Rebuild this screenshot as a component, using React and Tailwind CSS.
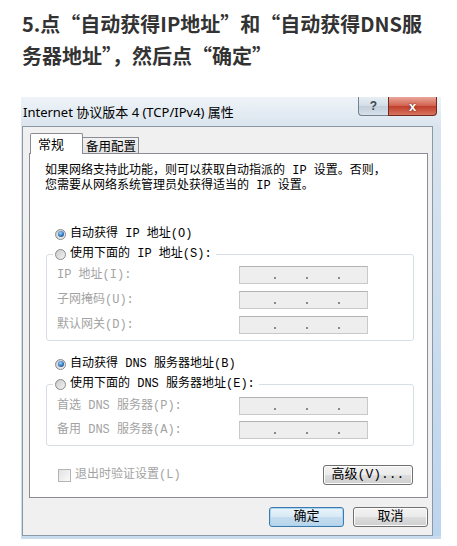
const cjk = "font-['Noto_Sans_CJK_SC',sans-serif]";
const sim = "font-['Liberation_Mono','Noto_Sans_CJK_SC',monospace]";

function Radio({ checked }) {
  return (
    <span className="inline-flex w-[11px] h-[11px] shrink-0 items-center justify-center rounded-full border border-[#8a8a8a] bg-[linear-gradient(135deg,#c9c9c9,#f4f4f4)]">
      {checked && (
        <span className="w-[6px] h-[6px] rounded-full bg-[radial-gradient(circle_at_40%_35%,#9fd6ff,#2a6fb4_60%,#163f6e)]" />
      )}
    </span>
  );
}

function IpBox() {
  return (
    <div className="w-[129px] h-[18px] border border-[#c9c9c9] border-t-[#b3b3b3] bg-[#eeeeee] flex items-end pl-[34px] gap-[30px] pb-[4px]">
      <span className="w-[2px] h-[2px] bg-[#8a8a8a]" />
      <span className="w-[2px] h-[2px] bg-[#8a8a8a]" />
      <span className="w-[2px] h-[2px] bg-[#8a8a8a]" />
    </div>
  );
}

function Row({ label }) {
  return (
    <div className="flex items-center h-[18px]">
      <span className={`w-[186px] pl-[4px] text-[12px] leading-[18px] text-[#a3a3a3] whitespace-nowrap ${sim}`}>{label}</span>
      <IpBox />
    </div>
  );
}

function Btn({ children, def, w = "w-[75px]" }) {
  return (
    <div
      className={`${w} h-[20px] rounded-[3px] border flex items-center justify-center text-[13px] leading-[18px] text-black whitespace-nowrap ${sim} ${
        def
          ? "border-[#3d7bad] bg-[linear-gradient(#eaf4fb,#d8e9f5_50%,#c4dcee_51%,#b9d5ea)] shadow-[inset_0_0_0_1px_#a9d5f2]"
          : "border-[#707070] bg-[linear-gradient(#f2f2f2,#ebebeb_50%,#dddddd_51%,#cfcfcf)] shadow-[inset_0_0_0_1px_#fcfcfc]"
      }`}
    >
      {children}
    </div>
  );
}

export default function App() {
  return (
    <div className="w-[457px] h-[546px] bg-white overflow-hidden">
      <h1 className={`pl-[22px] pt-[8px] text-[20px] leading-[32px] font-bold text-[#333333] ${cjk}`}>
        5.点“自动获得IP地址”和“自动获得DNS服
        <br />
        务器地址”，然后点“确定”
      </h1>

      <div className="ml-[21px] mt-[25px] w-[420px] pb-[3px] bg-[linear-gradient(180deg,#e6edf4,#d6e1eb_20%,#c9dbee)]">
        {/* title bar */}
        <div className="h-[29px] flex justify-between items-start bg-[linear-gradient(180deg,#eef3f8,#dbe5ee)]">
          <span className="pl-[2px] pt-[7px] text-[13px] leading-[16px] text-black whitespace-nowrap font-['Noto_Sans','Noto_Sans_CJK_SC',sans-serif]">
            Internet 协议版本 4 (TCP/IPv4) 属性
          </span>
          <div className="flex mr-[4px]">
            <div className="w-[30px] h-[19px] rounded-bl-[4px] border border-r-0 border-t-0 border-[#74818f] bg-[linear-gradient(#e8eef4,#d3dde7_50%,#c2ceda_51%,#d6e0ea)] flex items-center justify-center text-[12px] leading-none font-bold text-[#3b4754] font-['Liberation_Sans',sans-serif]">
              ?
            </div>
            <div className="w-[49px] h-[19px] rounded-br-[4px] border border-t-0 border-[#6f2b22] bg-[linear-gradient(#e9a79a,#d2604d_50%,#c03e2b_51%,#d8745f)] flex items-center justify-center text-[13px] leading-none font-bold text-white font-['Liberation_Sans',sans-serif] [text-shadow:0_0_2px_#5a1a10]">
              x
            </div>
          </div>
        </div>

        <div className="flex">
          {/* client area */}
          <div className="ml-[1px] w-[411px] h-[410px] bg-[#f0f0f0] border border-[#8c98a4] pl-[6px] pr-[4px] pt-[6px]">
            {/* tabs */}
            <div className="flex items-end relative z-10 pl-[1px]">
              <div className={`w-[53px] h-[21px] -mb-px bg-white border border-b-0 border-[#898c95] rounded-t-[2px] pl-[7px] text-[13px] leading-[20px] text-black whitespace-nowrap ${cjk}`}>
                常规
              </div>
              <div className={`w-[56px] h-[16px] border border-l-0 border-b-0 border-[#898c95] bg-[linear-gradient(#f2f2f2,#e3e3e3)] pl-[3px] text-[12.5px] leading-[16px] text-black whitespace-nowrap ${cjk}`}>
                备用配置
              </div>
            </div>

            {/* panel */}
            <div className="w-[399px] h-[345px] bg-white border border-[#898c95]">
              <div className={`pl-[15px] pt-[10px] text-[12px] leading-[15px] text-black whitespace-nowrap ${sim}`}>
                如果网络支持此功能，则可以获取自动指派的 IP 设置。否则，
                <br />
                您需要从网络系统管理员处获得适当的 IP 设置。
              </div>

              <div className={`mt-[30px] ml-[25px] h-[20px] flex items-center gap-[4px] text-[12px] leading-[20px] text-black ${sim}`}>
                <Radio checked />
                <span>自动获得 IP 地址(O)</span>
              </div>

              <fieldset className="ml-[16px] w-[368px] border border-[#d5dfe5] rounded-[3px] px-[6px] pb-[6px]">
                <legend className={`pl-[2px] pr-[4px] h-[20px] flex items-center gap-[4px] text-[12px] leading-[20px] text-black ${sim}`}>
                  <Radio />
                  <span>使用下面的 IP 地址(S):</span>
                </legend>
                <div className="flex flex-col gap-[7px] pt-[2px]">
                  <Row label="IP 地址(I):" />
                  <Row label="子网掩码(U):" />
                  <Row label="默认网关(D):" />
                </div>
              </fieldset>

              <div className={`mt-[13px] ml-[25px] h-[20px] flex items-center gap-[4px] text-[12px] leading-[20px] text-black ${sim}`}>
                <Radio checked />
                <span>自动获得 DNS 服务器地址(B)</span>
              </div>

              <fieldset className="ml-[16px] w-[368px] border border-[#d5dfe5] rounded-[3px] px-[6px] pb-[6px]">
                <legend className={`pl-[2px] pr-[4px] h-[20px] flex items-center gap-[4px] text-[12px] leading-[20px] text-black ${sim}`}>
                  <Radio />
                  <span>使用下面的 DNS 服务器地址(E):</span>
                </legend>
                <div className="flex flex-col gap-[6px] pt-[3px]">
                  <Row label="首选 DNS 服务器(P):" />
                  <Row label="备用 DNS 服务器(A):" />
                </div>
              </fieldset>

              <div className="mt-[19px] h-[20px] flex items-center justify-between pl-[28px] pr-[14px]">
                <div className={`flex items-center gap-[4px] text-[12px] leading-[20px] text-[#a3a3a3] ${sim}`}>
                  <span className="w-[13px] h-[13px] border border-[#b4b4b4] bg-[linear-gradient(135deg,#e2e2e2,#fafafa)]" />
                  <span>退出时验证设置(L)</span>
                </div>
                <Btn w="w-[90px]">高级(V)...</Btn>
              </div>
            </div>

            <div className="mt-[9px] flex justify-end gap-[9px]">
              <Btn def>确定</Btn>
              <Btn>取消</Btn>
            </div>
          </div>
          <div className="w-[8px] bg-[linear-gradient(180deg,#d9e4ee,#bcd5ee)]" />
        </div>
      </div>
    </div>
  );
}
